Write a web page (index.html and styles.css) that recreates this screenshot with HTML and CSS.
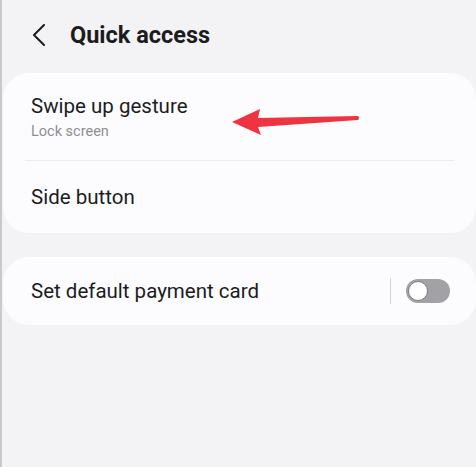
FILE: index.html
```html
<!DOCTYPE html>
<html lang="en">
<head>
  <meta charset="UTF-8" />
  <meta name="viewport" content="width=device-width, initial-scale=1.0" />
  <title>Quick access</title>
  <link rel="stylesheet" href="styles.css">
</head>
<body>
  <div class="screen">
    <div class="header">
      <svg class="back" width="14" height="22" viewBox="0 0 14 22">
        <path d="M12 1 L2 11 L12 21" fill="none" stroke="#1c1c1e" stroke-width="2" stroke-linecap="round" stroke-linejoin="round"/>
      </svg>
      <h1>Quick access</h1>
    </div>

    <div class="card">
      <div class="row row-tall">
        <div class="title">Swipe up gesture</div>
        <div class="sub">Lock screen</div>
      </div>
      <div class="divider"></div>
      <div class="row">
        <div class="title">Side button</div>
      </div>
    </div>

    <div class="card">
      <div class="row row-switch">
        <div class="title">Set default payment card</div>
        <div class="switch-wrap">
          <span class="vline"></span>
          <span class="switch"><span class="knob"></span></span>
        </div>
      </div>
    </div>

    <svg class="arrow" width="130" height="30" viewBox="0 0 130 30">
      <path d="M0 14 L28 1 L26 10 L126 8 Q128 10 126 12 L26 19 L29 27 Z" fill="#ef3340"/>
    </svg>
  </div>
</body>
</html>
```

FILE: styles.css
```css
body {
  margin: 0;
  background: #f3f3f6;
  font-family: 'Roboto', 'Noto Sans', sans-serif;
  color: #1c1c1e;
}

.screen {
  position: relative;
  height: 467px;
  border-left: 2px solid #c9c9cc;
  overflow: hidden;
}

.header {
  display: flex;
  align-items: center;
  height: 70px;
  padding-left: 30px;
  gap: 24px;
}

.header h1 {
  margin: 0;
  font-size: 23.5px;
  font-weight: 700;
}

.card {
  background: #fcfcfe;
  border-radius: 26px;
  margin: 3px 0 24px 1px;
  padding: 0 22px;
}

.row {
  display: flex;
  flex-direction: column;
  justify-content: center;
  height: 72px;
  padding-left: 6px;
}

.row-tall {
  height: 87px;
  justify-content: flex-start;
  padding-top: 20px;
  box-sizing: border-box;
}

.row-switch {
  flex-direction: row;
  align-items: center;
  justify-content: space-between;
  height: 68px;
}

.title {
  font-size: 20.5px;
  line-height: 26px;
}

.sub {
  font-size: 14.5px;
  color: #8e8e93;
  margin-top: 4px;
}

.divider {
  height: 1px;
  background: #ebebee;
}

.switch-wrap {
  display: flex;
  align-items: center;
  gap: 15px;
  margin-right: 4px;
}

.vline {
  width: 1px;
  height: 26px;
  background: #d5d5d8;
}

.switch {
  display: flex;
  align-items: center;
  width: 44px;
  height: 24px;
  border-radius: 12px;
  background: #a2a2a6;
  padding: 0 2px;
  box-sizing: border-box;
}

.knob {
  width: 20px;
  height: 20px;
  border-radius: 50%;
  background: #ffffff;
  border: 1.5px solid #7d7d82;
  box-sizing: border-box;
}

.arrow {
  position: absolute;
  left: 230px;
  top: 108px;
}
```
